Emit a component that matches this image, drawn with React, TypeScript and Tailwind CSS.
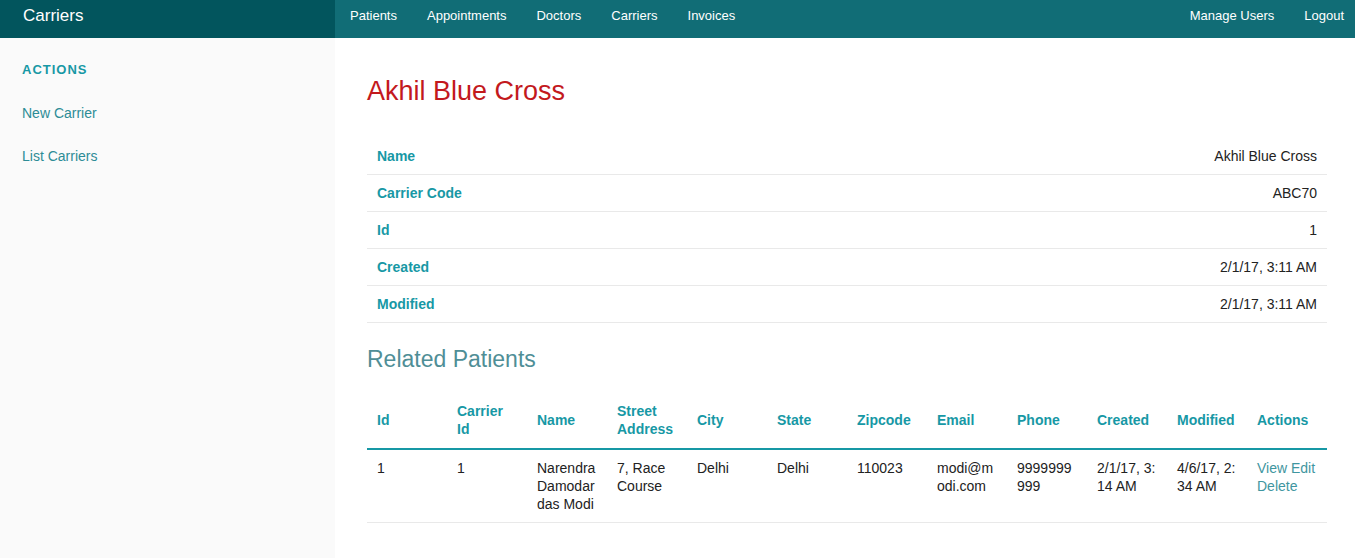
import React from 'react';

const navLeft = ['Patients', 'Appointments', 'Doctors', 'Carriers', 'Invoices'];
const navRight = ['Manage Users', 'Logout'];

const details: [string, string][] = [
  ['Name', 'Akhil Blue Cross'],
  ['Carrier Code', 'ABC70'],
  ['Id', '1'],
  ['Created', '2/1/17, 3:11 AM'],
  ['Modified', '2/1/17, 3:11 AM'],
];

const columns = ['Id', 'Carrier Id', 'Name', 'Street Address', 'City', 'State', 'Zipcode', 'Email', 'Phone', 'Created', 'Modified', 'Actions'];

const patient = ['1', '1', 'Narendra Damodar das Modi', '7, Race Course', 'Delhi', 'Delhi', '110023', 'modi@modi.com', '9999999999', '2/1/17, 3:14 AM', '4/6/17, 2:34 AM'];

export default function App() {
  return (
    <div className="min-h-[558px] bg-white text-[14px] text-[#222] font-['Liberation_Sans',Arial,sans-serif]">
      {/* top bar */}
      <div className="flex h-[38px] bg-[#116d76] text-white">
        <div className="w-[335px] shrink-0 bg-[#02555d] pl-[23px] flex items-center">
          <span className="text-[17px] leading-none -mt-[7px]">Carriers</span>
        </div>
        <div className="flex flex-1 items-center justify-between -mt-[6px] text-[13px]">
          <ul className="flex">
            {navLeft.map((n) => (
              <li key={n} className="px-[15px]">{n}</li>
            ))}
          </ul>
          <ul className="flex gap-[30px] pr-[11px]">
            {navRight.map((n) => (
              <li key={n}>{n}</li>
            ))}
          </ul>
        </div>
      </div>

      <div className="flex">
        {/* sidebar */}
        <div className="w-[335px] shrink-0 min-h-[520px] bg-[#fafafa] pl-[22px] pt-[23px]">
          <div className="text-[13px] font-bold tracking-[1px] text-[#1798a5] leading-[18px]">ACTIONS</div>
          <ul className="mt-[25px] space-y-[25px] text-[#2d8c96]">
            <li className="leading-[18px]">New Carrier</li>
            <li className="leading-[18px]">List Carriers</li>
          </ul>
        </div>

        {/* content */}
        <div className="flex-1 pl-[32px] pr-[28px]">
          <h3 className="mt-[34px] text-[27px] leading-[38px] text-[#c3191d]">Akhil Blue Cross</h3>

          <table className="mt-[28px] w-full border-collapse">
            <tbody>
              {details.map(([k, v]) => (
                <tr key={k} className="border-b border-[#e9e9e9]">
                  <th className="px-[10px] py-[9px] text-left font-bold text-[#1798a5] leading-[18px]">{k}</th>
                  <td className="px-[10px] py-[9px] text-right leading-[18px]">{v}</td>
                </tr>
              ))}
            </tbody>
          </table>

          <h4 className="mt-[20px] text-[23px] leading-[32px] text-[#4f8e96]">Related Patients</h4>

          <table className="mt-[17px] w-full border-collapse table-fixed">
            <thead>
              <tr className="border-b-2 border-[#1798a5]">
                {columns.map((c) => (
                  <th key={c} className="w-[80px] px-[10px] py-[10px] text-left align-middle font-bold text-[#1798a5] leading-[18px]">
                    {c}
                  </th>
                ))}
              </tr>
            </thead>
            <tbody>
              <tr className="border-b border-[#e9e9e9]">
                {patient.map((p, i) => (
                  <td key={i} className={`px-[10px] py-[9px] align-top leading-[18px] ${i >= 7 ? 'break-all' : ''}`}>
                    {p}
                  </td>
                ))}
                <td className="px-[10px] py-[9px] align-top leading-[18px] text-[#3f96a0]">
                  View Edit
                  <br />
                  Delete
                </td>
              </tr>
            </tbody>
          </table>
        </div>
      </div>
    </div>
  );
}
